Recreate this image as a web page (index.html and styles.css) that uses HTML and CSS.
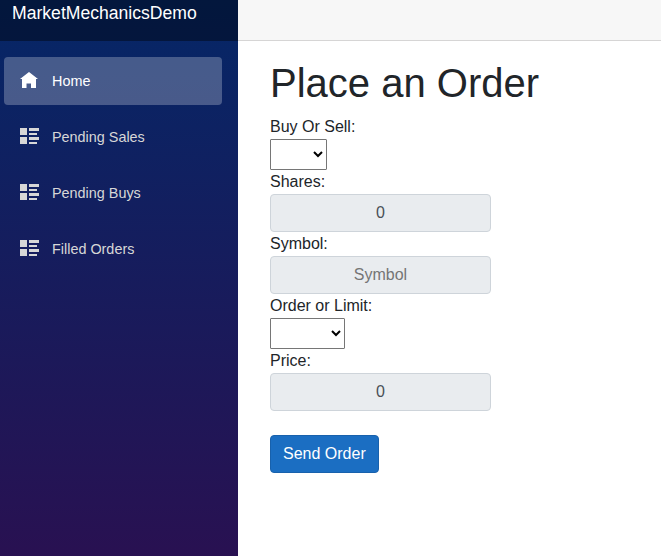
FILE: index.html
```html
<!DOCTYPE html>
<html lang="en">
<head>
<meta charset="utf-8">
<title>MarketMechanicsDemo</title>
<link rel="stylesheet" href="styles.css">
</head>
<body>
<svg width="0" height="0" class="defs" aria-hidden="true">
  <symbol id="list-rich" viewBox="0 0 19 16">
    <path d="M0 0h7v7H0zM9 0h10v3H9zM9 5h8v2H9zM0 9h7v7H0zM9 9h10v3H9zM9 14h8v2H9z"/>
  </symbol>
</svg>
<div class="app">
  <aside class="sidebar">
    <div class="brand-row"><a class="brand">MarketMechanicsDemo</a></div>
    <nav class="nav">
      <a class="nav-link active"><svg class="icon" viewBox="0 0 19 16"><path d="M9 0L0 7h2v9h4.5v-4.5h4.500v4.500H16V7h2z"/></svg>Home</a>
      <a class="nav-link"><svg class="icon"><use href="#list-rich"/></svg>Pending Sales</a>
      <a class="nav-link"><svg class="icon"><use href="#list-rich"/></svg>Pending Buys</a>
      <a class="nav-link"><svg class="icon"><use href="#list-rich"/></svg>Filled Orders</a>
    </nav>
  </aside>
  <main class="main">
    <div class="top-row"></div>
    <form class="content">
      <h1>Place an Order</h1>
      <label for="side">Buy Or Sell:</label>
      <select id="side" class="side"></select>
      <label for="shares">Shares:</label>
      <input id="shares" value="0" disabled>
      <label for="symbol">Symbol:</label>
      <input id="symbol" placeholder="Symbol" disabled>
      <label for="kind">Order or Limit:</label>
      <select id="kind" class="kind"></select>
      <label for="price">Price:</label>
      <input id="price" value="0" disabled>
      <button type="button">Send Order</button>
    </form>
  </main>
</div>
</body>
</html>
```
FILE: styles.css
```css
* { box-sizing: border-box; }
body {
  margin: 0;
  overflow: hidden;
  font: 16px/24px "Liberation Sans", Arial, sans-serif;
  color: #212529;
  background: #fff;
}
.defs { display: block; }
.app { display: flex; height: 100vh; }
.sidebar {
  flex: 0 0 238px;
  background: linear-gradient(180deg, #052767 0, #3a0647 830px);
}
.brand-row {
  height: 41px;
  padding: 0 12px;
  background: rgba(0, 0, 0, 0.4);
}
.brand {
  display: block;
  font-size: 17.6px;
  line-height: 26px;
  color: #fff;
}
.nav { padding: 16px 16px 0 4px; }
.nav-link {
  display: flex;
  align-items: center;
  height: 48px;
  margin-bottom: 8px;
  padding-left: 16px;
  border-radius: 4px;
  font-size: 14.4px;
  color: #d7d7d7;
}
.nav-link.active { background: rgba(255, 255, 255, 0.25); color: #fff; }
.icon {
  width: 19px;
  height: 16px;
  margin: -2px 13px 0 0;
  fill: currentColor;
}
.main { flex: 1; }
.top-row {
  height: 41px;
  background: #f7f7f7;
  border-bottom: 1px solid #d6d5d5;
}
.content {
  display: flex;
  flex-direction: column;
  align-items: flex-start;
  padding: 18px 32px 0;
}
h1 { margin: 0 0 8px; font-size: 40px; line-height: 48px; font-weight: 400; }
label { height: 24px; }
select {
  height: 31px;
  font: inherit;
  color: #000;
  background: #fff;
  border: 1px solid #767676;
  border-radius: 1px;
}
.side { width: 57px; }
.kind { width: 75px; }
input {
  width: 221px;
  height: 38px;
  padding: 6px 12px;
  font: inherit;
  color: #495057;
  text-align: center;
  background: #e9ecef;
  border: 1px solid #ced4da;
  border-radius: 4px;
}
input::placeholder { color: #757575; opacity: 1; }
button {
  height: 38px;
  margin-top: 24px;
  padding: 0 12px;
  font: inherit;
  color: #fff;
  background: #1b6ec2;
  border: 1px solid #1861ac;
  border-radius: 4px;
}
```
